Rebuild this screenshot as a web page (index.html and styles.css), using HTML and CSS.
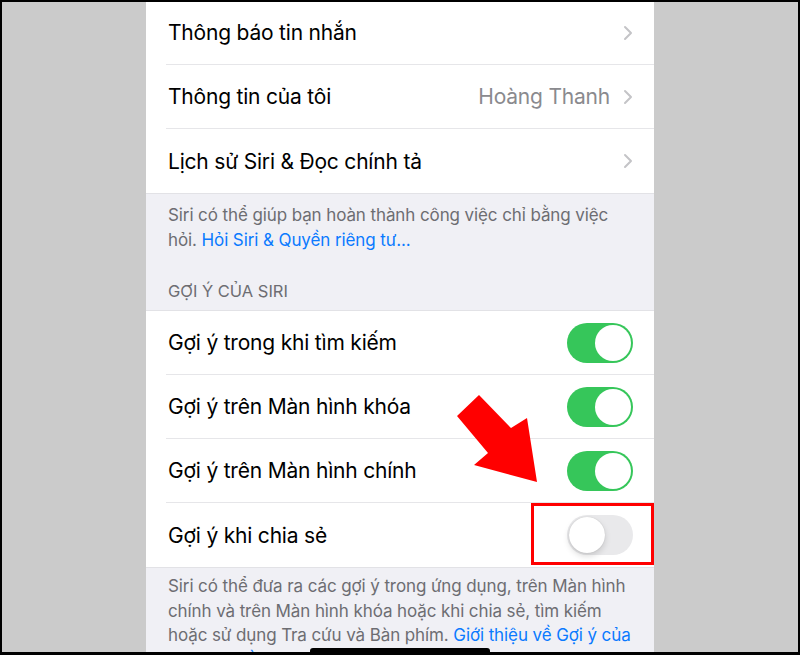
FILE: index.html
```html
<!DOCTYPE html>
<html lang="vi">

<head>
    <meta charset="UTF-8">
    <meta name="viewport" content="width=device-width, initial-scale=1.0">
    <title>Siri &amp; Tìm kiếm</title>
    <link rel="stylesheet" href="styles.css">
</head>

<body>
    <div class="frame">
        <div class="phone">
            <!-- first group: notifications, my info, history -->
            <ul class="group group-top">
                <li class="row">
                    <span class="row-title">Thông báo tin nhắn</span>
                    <span class="chevron"><svg width="10" height="16" viewBox="0 0 10 16"><path d="M2 2 L8 8 L2 14" fill="none" stroke="#c4c4c7" stroke-width="2" stroke-linecap="round" stroke-linejoin="round"/></svg></span>
                </li>
                <li class="row">
                    <span class="row-title">Thông tin của tôi</span>
                    <span class="row-value">Hoàng Thanh</span>
                    <span class="chevron"><svg width="10" height="16" viewBox="0 0 10 16"><path d="M2 2 L8 8 L2 14" fill="none" stroke="#c4c4c7" stroke-width="2" stroke-linecap="round" stroke-linejoin="round"/></svg></span>
                </li>
                <li class="row">
                    <span class="row-title">Lịch sử Siri &amp; Đọc chính tả</span>
                    <span class="chevron"><svg width="10" height="16" viewBox="0 0 10 16"><path d="M2 2 L8 8 L2 14" fill="none" stroke="#c4c4c7" stroke-width="2" stroke-linecap="round" stroke-linejoin="round"/></svg></span>
                </li>
            </ul>
            <p class="footnote footnote-first">Siri có thể giúp bạn hoàn thành công việc chỉ bằng việc<br>hỏi. <a href="#">Hỏi Siri &amp; Quyền riêng tư...</a></p>

            <h2 class="section-title">GỢI Ý CỦA SIRI</h2>
            <ul class="group">
                <li class="row">
                    <span class="row-title">Gợi ý trong khi tìm kiếm</span>
                    <span class="switch on"><span class="knob"></span></span>
                </li>
                <li class="row">
                    <span class="row-title">Gợi ý trên Màn hình khóa</span>
                    <span class="switch on"><span class="knob"></span></span>
                </li>
                <li class="row">
                    <span class="row-title">Gợi ý trên Màn hình chính</span>
                    <span class="switch on"><span class="knob"></span></span>
                </li>
                <li class="row">
                    <span class="row-title">Gợi ý khi chia sẻ</span>
                    <span class="switch"><span class="knob"></span></span>
                </li>
            </ul>
            <p class="footnote footnote-last">Siri có thể đưa ra các gợi ý trong ứng dụng, trên Màn hình<br>chính và trên Màn hình khóa hoặc khi chia sẻ, tìm kiếm<br>hoặc sử dụng Tra cứu và Bàn phím. <a href="#">Giới thiệu về Gợi ý của<br>Siri &amp; Quyền riêng tư...</a></p>

            <!-- highlight on the sharing switch -->
            <svg class="arrow" width="90" height="100" viewBox="0 0 90 100">
                <polygon points="2,31 24,10 56,43 72,33 82,97 19,80 33,68" fill="#ff0000"/>
            </svg>
            <div class="highlight"></div>
        </div>
        <div class="home-bar"></div>
    </div>
</body>

</html>
```

FILE: styles.css
```css
* {
    box-sizing: border-box;
}

body {
    margin: 0;
    background-color: #000;
    font-family: Inter, "Noto Sans", sans-serif;
}

.frame {
    position: relative;
    width: 800px;
    height: 655px;
    border: 2px solid #000;
    border-bottom-width: 3px;
    background-color: #cbcbcb;
    display: flex;
    justify-content: center;
    overflow: hidden;
}

.phone {
    position: relative;
    width: 508px;
    background-color: #f0f0f5;
    overflow: hidden;
}

.group {
    list-style: none;
    margin: 0;
    padding: 0;
    background-color: #fff;
    border-top: 1px solid #e2e2e6;
    border-bottom: 1px solid #e2e2e6;
}

.group-top {
    border-top: none;
    margin-top: -1px;
}

.row {
    display: flex;
    align-items: center;
    height: 64px;
    margin-left: 20px;
    padding-right: 21px;
    border-bottom: 1px solid #e6e6e9;
}

.row:last-child {
    border-bottom: none;
}

.row-title {
    flex: 1;
    padding-left: 2px;
    font-size: 21px;
    color: #000;
    letter-spacing: -0.2px;
}

.row-value {
    font-size: 21px;
    color: #8a8a8e;
    margin-right: 13px;
    letter-spacing: -0.2px;
}

.chevron {
    display: flex;
}

.footnote {
    margin: 0;
    padding: 9px 20px 0 22px;
    font-size: 17px;
    line-height: 24.5px;
    color: #6d6d72;
    letter-spacing: -0.1px;
}

.footnote a {
    color: #0a7aff;
    text-decoration: none;
}

.footnote-first {
    height: 68px;
}

.footnote-last {
    padding-top: 6px;
}

.section-title {
    margin: 0;
    padding: 19px 22px 9px;
    font-size: 16.5px;
    font-weight: 400;
    line-height: 20px;
    color: #6d6d72;
}

.switch {
    position: relative;
    width: 66px;
    height: 40px;
    border-radius: 20px;
    background-color: #e9e9eb;
}

.switch.on {
    background-color: #36c65a;
}

.knob {
    position: absolute;
    top: 2px;
    left: 2px;
    width: 36px;
    height: 36px;
    border-radius: 50%;
    background-color: #fff;
    box-shadow: 0 3px 6px rgba(0, 0, 0, 0.15), 0 0 1px rgba(0, 0, 0, 0.2);
}

.switch.on .knob {
    left: 28px;
    box-shadow: none;
}

.arrow {
    position: absolute;
    left: 309px;
    top: 383px;
}

.highlight {
    position: absolute;
    left: 385px;
    top: 501px;
    width: 123px;
    height: 62px;
    border: 3px solid #ff0000;
}

.home-bar {
    position: absolute;
    left: 308px;
    bottom: 0;
    width: 180px;
    height: 4px;
    background-color: #000;
    border-radius: 3px 3px 0 0;
}
```
